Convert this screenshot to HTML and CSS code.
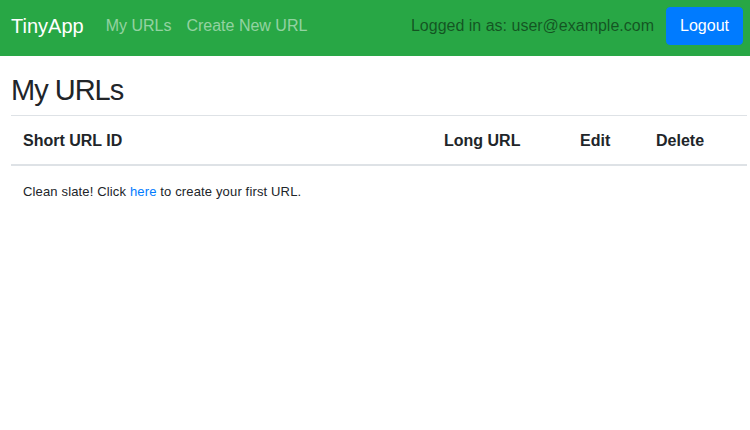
FILE: index.html
```html
<!DOCTYPE html>
<html>
<head>
<meta charset="utf-8">
<link rel="stylesheet" href="styles.css">
</head>
<body>
<nav class="navbar">
  <a class="brand" href="#">TinyApp</a>
  <div class="nav-links">
    <a class="nav-link" href="#">My URLs</a>
    <a class="nav-link" href="#">Create New URL</a>
  </div>
  <div class="nav-right">
    <span class="login-text">Logged in as: user@example.com</span>
    <button class="btn-logout">Logout</button>
  </div>
</nav>
<main class="content">
  <h2 class="title">My URLs</h2>
  <table class="url-table">
    <colgroup>
      <col class="c1"><col class="c2"><col class="c3"><col class="c4">
    </colgroup>
    <thead>
      <tr><th>Short URL ID</th><th>Long URL</th><th>Edit</th><th>Delete</th></tr>
    </thead>
    <tbody>
      <tr><td colspan="4"><span class="empty">Clean slate! Click <a href="#">here</a> to create your first URL.</span></td></tr>
    </tbody>
  </table>
</main>
</body>
</html>
```
FILE: styles.css
```css
* { box-sizing: border-box; }
body {
  margin: 0;
  font-family: "Liberation Sans", Arial, sans-serif;
  color: #212529;
  background: #fff;
}
.navbar {
  display: flex;
  align-items: center;
  height: 56px;
  padding: 0 7px 4px 11px;
  background: #28a745;
}
.brand {
  font-size: 20px;
  color: #fff;
  text-decoration: none;
  margin-right: 22px;
}
.nav-links { display: flex; gap: 15px; }
.nav-link {
  font-size: 16px;
  color: rgba(255,255,255,.5);
  text-decoration: none;
}
.nav-right {
  margin-left: auto;
  display: flex;
  align-items: center;
  gap: 12px;
}
.login-text {
  font-size: 16px;
  color: rgba(0,0,0,.5);
}
.btn-logout {
  font-family: inherit;
  font-size: 16px;
  color: #fff;
  background: #007bff;
  border: 1px solid #007bff;
  border-radius: 4px;
  height: 38px;
  width: 77px;
  padding: 0;
}
.content { padding: 0 3px 0 11px; }
.title {
  font-size: 29px;
  letter-spacing: -1px;
  font-weight: 500;
  line-height: 38px;
  margin: 15px 0 6px;
}
.url-table {
  width: 100%;
  border-collapse: collapse;
}
.c1 { width: 421px; }
.c2 { width: 136px; }
.c3 { width: 76px; }
.url-table th {
  text-align: left;
  font-size: 16px;
  font-weight: bold;
  line-height: 24px;
  padding: 13px 12px 11px;
  border-top: 1px solid #dee2e6;
  border-bottom: 2px solid #dee2e6;
}
.url-table td {
  padding: 13px 12px 11px;
  line-height: 24px;
}
.empty { font-size: 13px; letter-spacing: 0.15px; }
.empty a { color: #007bff; text-decoration: none; }
```
